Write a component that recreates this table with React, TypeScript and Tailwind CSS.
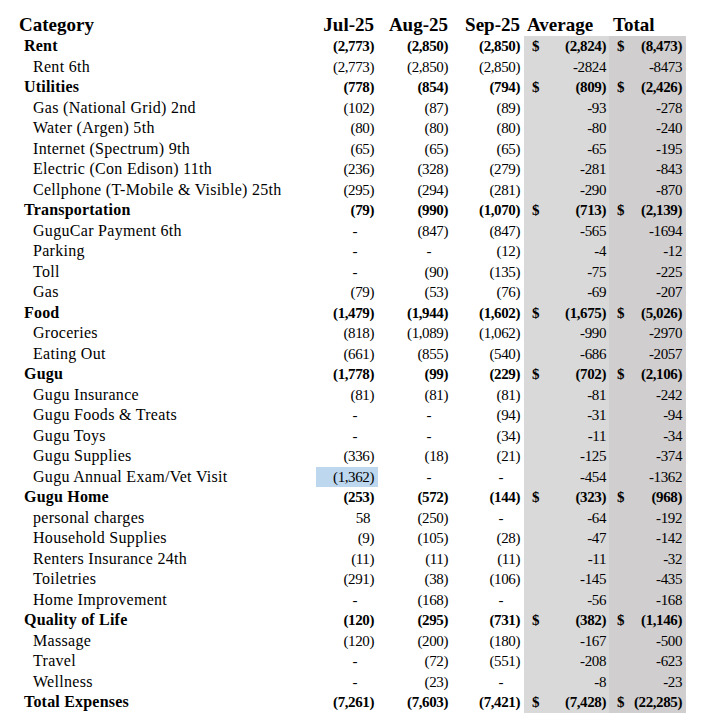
import React from 'react';

type Row = {
  label: string;
  bold?: boolean;
  jul: string;
  aug: string;
  sep: string;
  avg: string;
  total: string;
  highlight?: boolean;
};

const rows: Row[] = [
  { label: 'Rent', bold: true, jul: '(2,773)', aug: '(2,850)', sep: '(2,850)', avg: '(2,824)', total: '(8,473)' },
  { label: 'Rent 6th', jul: '(2,773)', aug: '(2,850)', sep: '(2,850)', avg: '-2824', total: '-8473' },
  { label: 'Utilities', bold: true, jul: '(778)', aug: '(854)', sep: '(794)', avg: '(809)', total: '(2,426)' },
  { label: 'Gas (National Grid) 2nd', jul: '(102)', aug: '(87)', sep: '(89)', avg: '-93', total: '-278' },
  { label: 'Water (Argen) 5th', jul: '(80)', aug: '(80)', sep: '(80)', avg: '-80', total: '-240' },
  { label: 'Internet (Spectrum) 9th', jul: '(65)', aug: '(65)', sep: '(65)', avg: '-65', total: '-195' },
  { label: 'Electric (Con Edison) 11th', jul: '(236)', aug: '(328)', sep: '(279)', avg: '-281', total: '-843' },
  { label: 'Cellphone (T-Mobile & Visible) 25th', jul: '(295)', aug: '(294)', sep: '(281)', avg: '-290', total: '-870' },
  { label: 'Transportation', bold: true, jul: '(79)', aug: '(990)', sep: '(1,070)', avg: '(713)', total: '(2,139)' },
  { label: 'GuguCar Payment 6th', jul: '-', aug: '(847)', sep: '(847)', avg: '-565', total: '-1694' },
  { label: 'Parking', jul: '-', aug: '-', sep: '(12)', avg: '-4', total: '-12' },
  { label: 'Toll', jul: '-', aug: '(90)', sep: '(135)', avg: '-75', total: '-225' },
  { label: 'Gas', jul: '(79)', aug: '(53)', sep: '(76)', avg: '-69', total: '-207' },
  { label: 'Food', bold: true, jul: '(1,479)', aug: '(1,944)', sep: '(1,602)', avg: '(1,675)', total: '(5,026)' },
  { label: 'Groceries', jul: '(818)', aug: '(1,089)', sep: '(1,062)', avg: '-990', total: '-2970' },
  { label: 'Eating Out', jul: '(661)', aug: '(855)', sep: '(540)', avg: '-686', total: '-2057' },
  { label: 'Gugu', bold: true, jul: '(1,778)', aug: '(99)', sep: '(229)', avg: '(702)', total: '(2,106)' },
  { label: 'Gugu Insurance', jul: '(81)', aug: '(81)', sep: '(81)', avg: '-81', total: '-242' },
  { label: 'Gugu Foods & Treats', jul: '-', aug: '-', sep: '(94)', avg: '-31', total: '-94' },
  { label: 'Gugu Toys', jul: '-', aug: '-', sep: '(34)', avg: '-11', total: '-34' },
  { label: 'Gugu Supplies', jul: '(336)', aug: '(18)', sep: '(21)', avg: '-125', total: '-374' },
  { label: 'Gugu Annual Exam/Vet Visit', jul: '(1,362)', aug: '-', sep: '-', avg: '-454', total: '-1362', highlight: true },
  { label: 'Gugu Home', bold: true, jul: '(253)', aug: '(572)', sep: '(144)', avg: '(323)', total: '(968)' },
  { label: 'personal charges', jul: '58', aug: '(250)', sep: '-', avg: '-64', total: '-192' },
  { label: 'Household Supplies', jul: '(9)', aug: '(105)', sep: '(28)', avg: '-47', total: '-142' },
  { label: 'Renters Insurance 24th', jul: '(11)', aug: '(11)', sep: '(11)', avg: '-11', total: '-32' },
  { label: 'Toiletries', jul: '(291)', aug: '(38)', sep: '(106)', avg: '-145', total: '-435' },
  { label: 'Home Improvement', jul: '-', aug: '(168)', sep: '-', avg: '-56', total: '-168' },
  { label: 'Quality of Life', bold: true, jul: '(120)', aug: '(295)', sep: '(731)', avg: '(382)', total: '(1,146)' },
  { label: 'Massage', jul: '(120)', aug: '(200)', sep: '(180)', avg: '-167', total: '-500' },
  { label: 'Travel', jul: '-', aug: '(72)', sep: '(551)', avg: '-208', total: '-623' },
  { label: 'Wellness', jul: '-', aug: '(23)', sep: '-', avg: '-8', total: '-23' },
  { label: 'Total Expenses', bold: true, jul: '(7,261)', aug: '(7,603)', sep: '(7,421)', avg: '(7,428)', total: '(22,285)' },
];

const grid = 'grid grid-cols-[316px_62px_74px_72px_85px_77px]';

// accounting style: dashes sit left of the edge, positives leave room for ")"
function Amount({ value }: { value: string }) {
  if (value === '-') return <span className="pr-[17px]">-</span>;
  if (!value.startsWith('(') && !value.startsWith('-')) return <span className="pr-[4px]">{value}</span>;
  return <span>{value}</span>;
}

export default function App() {
  return (
    <div className="w-[708px] h-[728px] bg-white text-black pt-[13px] font-['Liberation_Serif',serif]">
      <div className={`${grid} h-[23px] items-end text-[19px] font-bold leading-[23px]`}>
        <div className="pl-[19px]">Category</div>
        <div className="text-right pr-[4px]">Jul-25</div>
        <div className="text-right pr-[4px]">Aug-25</div>
        <div className="text-right pr-[4px]">Sep-25</div>
        <div className="pl-[3px]">Average</div>
        <div className="pl-[4px]">Total</div>
      </div>
      {rows.map((r) => (
        <div key={r.label + r.jul} className={`${grid} h-[20.5px] leading-[20.5px] ${r.bold ? 'font-bold' : ''}`}>
          <div className={r.bold ? 'pl-[24px] text-[16px] tracking-[0.2px]' : 'pl-[33px] text-[16px] tracking-[0.3px]'}>
            {r.label}
          </div>
          <div className={`text-right pr-[4px] text-[15px] tracking-[-0.4px] ${r.highlight ? 'bg-[#bdd7ee]' : ''}`}>
            <Amount value={r.jul} />
          </div>
          <div className="text-right pr-[4px] text-[15px] tracking-[-0.4px]">
            <Amount value={r.aug} />
          </div>
          <div className="text-right pr-[4px] text-[15px] tracking-[-0.4px]">
            <Amount value={r.sep} />
          </div>
          <div className="flex justify-between bg-[#d9d9d9] pl-[8px] pr-[3px] text-[15px] tracking-[-0.4px]">
            <span>{r.bold ? '$' : ''}</span>
            <span>{r.avg}</span>
          </div>
          <div className="flex justify-between bg-[#d0cece] pl-[8px] pr-[4px] text-[15px] tracking-[-0.4px]">
            <span>{r.bold ? '$' : ''}</span>
            <span>{r.total}</span>
          </div>
        </div>
      ))}
    </div>
  );
}
